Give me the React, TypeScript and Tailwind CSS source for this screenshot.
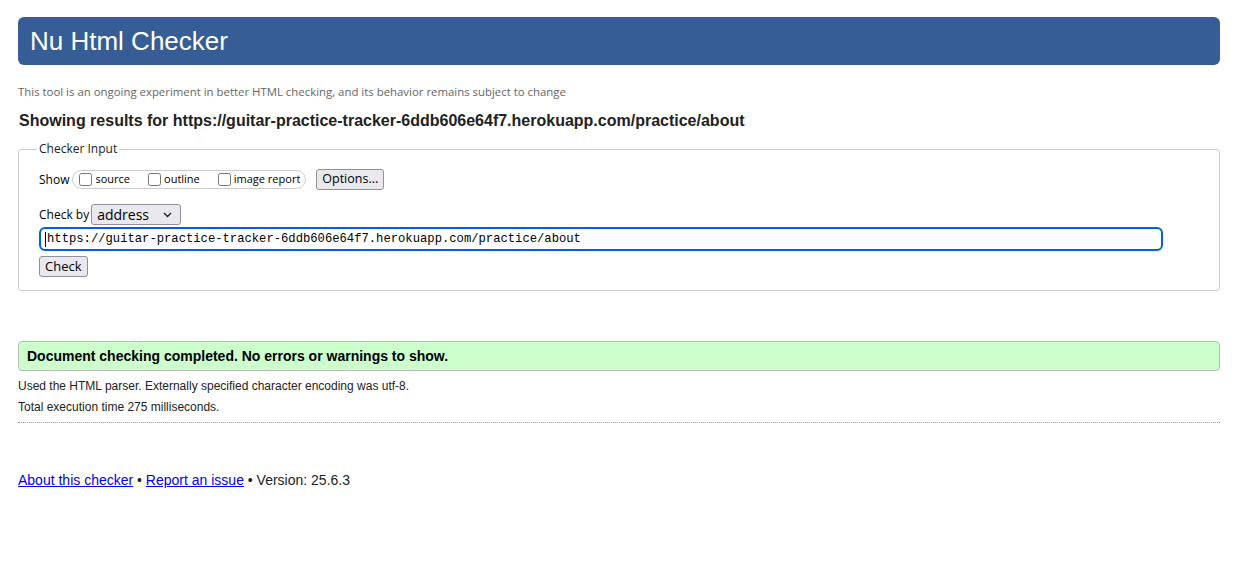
export default function App() {
  const ui = "font-['Open_Sans','Noto_Sans',sans-serif]"
  return (
    <div className="min-h-[562px] bg-white px-[18px] pt-[17px] font-['Liberation_Sans',Arial,sans-serif] text-black w-[1202px] box-content">
      <h1 className="h-12 rounded-md bg-[#365d95] pl-3 text-[26px] leading-[48px] text-white">Nu Html Checker</h1>

      <p className={`mt-[19px] text-[11.4px] leading-4 text-[#666] ${ui}`}>
        This tool is an ongoing experiment in better HTML checking, and its behavior remains subject to change
      </p>
      <h2 className="mt-[11px] pl-px text-[16px] font-bold leading-5 text-[#222]">
        Showing results for https://guitar-practice-tracker-6ddb606e64f7.herokuapp.com/practice/about
      </h2>

      <fieldset className={`mt-[10px] h-[150px] rounded-[3px] border border-[#ccc] pl-5 pr-[56px] ${ui}`}>
        <legend className="ml-[-2px] px-0.5 text-[12px] leading-4 text-[#222]">Checker Input</legend>

        <div className="mt-[12px] flex items-center text-[12px]">
          <span className="mr-[3px]">Show</span>
          <div className="flex h-[19px] items-center rounded-full border border-[#ccc] pl-[6px] pr-[5px]">
            <label className="flex items-center">
              <input type="checkbox" className="mr-[3px] h-[13px] w-[13px]" />
              <span className="mr-[18px] text-[11px]">source</span>
            </label>
            <label className="flex items-center">
              <input type="checkbox" className="mr-[3px] h-[13px] w-[13px]" />
              <span className="mr-[18px] text-[11px]">outline</span>
            </label>
            <label className="flex items-center">
              <input type="checkbox" className="mr-[3px] h-[13px] w-[13px]" />
              <span className="text-[11px]">image report</span>
            </label>
          </div>
          <button className="ml-[10px] h-[21px] rounded-[3px] border border-[#8f8f9d] bg-[#e9e9ed] px-[5px] text-[12.5px] leading-none">
            Options...
          </button>
        </div>

        <div className="mt-[14px] flex items-center text-[12px]">
          <span className="mr-[2px]">Check by</span>
          <div className="flex h-[21px] w-[90px] items-center justify-between rounded-[3px] border border-[#8f8f9d] bg-[#e9e9ed] pl-[5px] pr-[8px]">
            <span className="text-[14px] leading-none">address</span>
            <svg width="9" height="6" viewBox="0 0 9 6" fill="none" stroke="#222" strokeWidth="1.4">
              <path d="M1 1l3.5 3.5L8 1" />
            </svg>
          </div>
        </div>

        <div className="mt-[2px] flex h-[24px] items-center rounded-[6px] border-2 border-[#0060df] pl-[5px] font-['Liberation_Mono','DejaVu_Sans_Mono',monospace] text-[12.2px] leading-none">
          <span className="-ml-px mr-px h-[15px] w-px bg-black" />
          https://guitar-practice-tracker-6ddb606e64f7.herokuapp.com/practice/about
        </div>

        <button className="mt-[5px] h-[21px] rounded-[3px] border border-[#8f8f9d] bg-[#e9e9ed] px-[5px] text-[13px] leading-none">
          Check
        </button>
      </fieldset>

      <div className="mt-[50px] flex h-[30px] items-center rounded-[4px] border border-[#bbb] bg-[#ccffcc] pl-2 text-[14px] font-bold">
        Document checking completed. No errors or warnings to show.
      </div>
      <p className="mt-[7px] text-[12px] leading-4 text-[#222]">Used the HTML parser. Externally specified character encoding was utf-8.</p>
      <p className="mt-[5px] text-[12px] leading-4 text-[#222]">Total execution time 275 milliseconds.</p>
      <hr className="mt-[7px] border-0 border-t border-dotted border-[#999]" />

      <p className="mt-[49px] text-[14px] leading-4 text-[#222]">
        <a href="#" className="text-[#0000ee] underline">About this checker</a> •{' '}
        <a href="#" className="text-[#0000ee] underline">Report an issue</a> • Version: 25.6.3
      </p>
    </div>
  )
}
